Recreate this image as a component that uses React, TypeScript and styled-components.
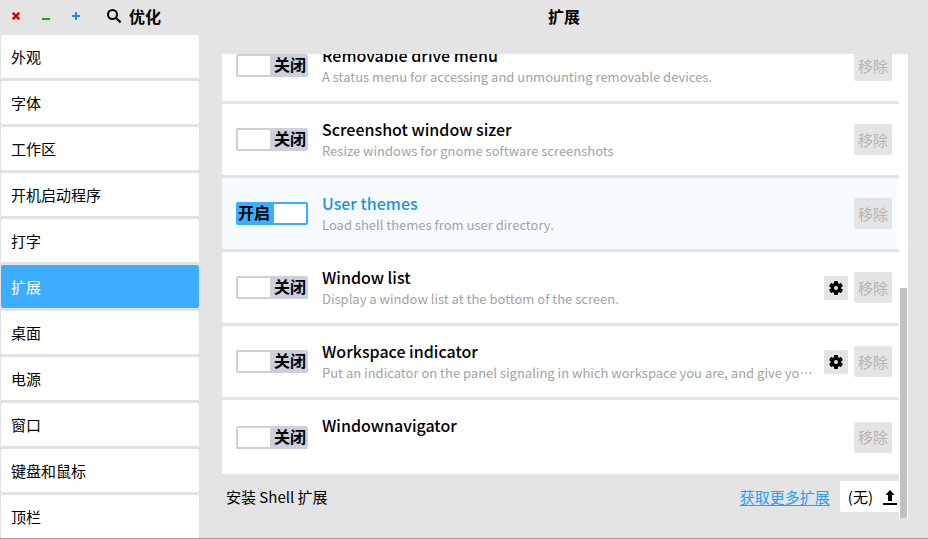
import React, { useState } from "react";
import styled, { createGlobalStyle, css } from "styled-components";

const GlobalStyle = createGlobalStyle`
  *, *::before, *::after { box-sizing: border-box; }
  body {
    margin: 0;
    background: #e4e4e4;
    color: #000;
    font-family: "Noto Sans CJK SC", "Noto Sans", sans-serif;
    font-size: 15px;
    line-height: 24px;
  }
  button { font: inherit; color: inherit; }
`;

const Window = styled.div`
  display: flex;
  height: 100vh;
  overflow: hidden;
  border-bottom: 1px solid #a3a3a3;
`;

const Sidebar = styled.aside`
  display: flex;
  flex-direction: column;
  width: 200px;
  flex: none;
  background: #e2e2e4;
`;

const TitleBar = styled.header`
  display: flex;
  align-items: center;
  height: 35px;
  flex: none;
  padding-bottom: 3px;
  background: #e4e4e4;
`;

const WindowControls = styled.div`
  display: flex;
  gap: 14px;
  padding-left: 8px;
`;

const IconButton = styled.button`
  display: grid;
  place-items: center;
  width: 16px;
  height: 16px;
  padding: 0;
  border: 0;
  background: none;
`;

const SearchButton = styled(IconButton)`
  margin-left: 22px;
`;

const AppName = styled.h1`
  margin: 0 0 0 7px;
  font-size: 16px;
  line-height: 24px;
  font-weight: 700;
`;

const NavList = styled.nav`
  display: flex;
  flex-direction: column;
  gap: 3px;
  padding: 0 1px;
`;

const NavItem = styled.button<{ $active: boolean }>`
  height: 43px;
  padding: 0 10px;
  border: 0;
  border-radius: 2px;
  text-align: left;
  background: ${(p) => (p.$active ? "#3daeff" : "#fff")};
  color: ${(p) => (p.$active ? "#fff" : "#000")};
`;

const Main = styled.main`
  display: flex;
  flex-direction: column;
  flex: 1;
  min-width: 0;
`;

const PageHeader = styled.header`
  display: flex;
  justify-content: center;
  align-items: center;
  height: 35px;
  flex: none;
  padding-bottom: 3px;
`;

const PageTitle = styled.h2`
  margin: 0;
  font-size: 16px;
  line-height: 24px;
  font-weight: 700;
`;

const ScrollArea = styled.div`
  display: flex;
  flex: 1;
  min-height: 0;
  margin: 19px 20px 20px 22px;
`;

const Viewport = styled.div`
  display: flex;
  flex-direction: column;
  justify-content: flex-end;
  flex: 1;
  min-width: 0;
  overflow: hidden;
`;

const ScrollTrack = styled.div`
  display: flex;
  flex-direction: column;
  justify-content: flex-end;
  width: 9px;
  padding: 0 1px;
  background: #fff;
`;

const ScrollThumb = styled.div`
  height: 230px;
  background: #c2c2c2;
`;

const ExtensionList = styled.ul`
  display: flex;
  flex-direction: column;
  gap: 3px;
  margin: 0;
  padding: 0;
  list-style: none;
`;

const ExtensionRow = styled.li<{ $on: boolean }>`
  display: flex;
  align-items: center;
  height: 71px;
  flex: none;
  padding: 0 7px 0 14px;
  border-radius: 2px 0 0 2px;
  background: ${(p) => (p.$on ? "#f6fbff" : "#fff")};
  &:last-child { height: 74px; }
`;

const Switch = styled.label<{ $on: boolean }>`
  display: flex;
  flex: none;
  width: 72px;
  height: 23px;
  padding: 2px;
  border-radius: 2px;
  background: ${(p) => (p.$on ? "#3daeff" : "#cdd0da")};
  ${(p) => p.$on && css`flex-direction: row-reverse;`}
`;

const SwitchInput = styled.input`
  appearance: none;
  flex: none;
  width: 32px;
  height: 19px;
  margin: 0;
  background: #fff;
`;

const SwitchText = styled.span<{ $on: boolean }>`
  flex: 1;
  line-height: 17px;
  white-space: nowrap;
  text-align: ${(p) => (p.$on ? "left" : "right")};
  font-size: 16px;
  font-weight: 700;
`;

const Info = styled.div`
  flex: 1;
  min-width: 0;
  align-self: flex-start;
  padding: 13px 8px 0 14px;
`;

const Name = styled.h3<{ $on: boolean }>`
  margin: 0;
  font-size: 16px;
  line-height: 24px;
  font-weight: 500;
  color: ${(p) => (p.$on ? "#1f93e0" : "#000")};
`;

const Description = styled.p`
  margin: 0;
  font-size: 13px;
  line-height: 20px;
  color: #a3a3a3;
  overflow: hidden;
  white-space: nowrap;
  text-overflow: ellipsis;
`;

const SettingsButton = styled.button`
  display: grid;
  place-items: center;
  flex: none;
  width: 24px;
  height: 24px;
  margin-right: 6px;
  padding: 0;
  border: 0;
  border-radius: 2px;
  background: #e4e4e4;
`;

const RemoveButton = styled.button`
  flex: none;
  height: 31px;
  padding: 0 4px;
  border: 0;
  border-radius: 2px;
  background: #e4e4e4;
  color: #b4b4b4;
`;

const InstallBar = styled.div`
  display: flex;
  align-items: center;
  flex: none;
  padding: 7px 0 6px 4px;
`;

const InstallLabel = styled.span`
  flex: 1;
`;

const MoreLink = styled.a`
  color: #2a9df4;
  text-decoration: underline;
  text-underline-offset: 2px;
`;

const FileButton = styled.button`
  display: flex;
  align-items: center;
  gap: 10px;
  height: 31px;
  margin-left: 10px;
  padding: 0 2px 0 8px;
  border: 0;
  border-radius: 2px 0 0 2px;
  background: #fff;
`;

const pages = ["外观", "字体", "工作区", "开机启动程序", "打字", "扩展", "桌面", "电源", "窗口", "键盘和鼠标", "顶栏"];

type Extension = { name: string; description?: string; settings?: boolean; enabled?: boolean };

const extensions: Extension[] = [
  { name: "Removable drive menu", description: "A status menu for accessing and unmounting removable devices." },
  { name: "Screenshot window sizer", description: "Resize windows for gnome software screenshots" },
  { name: "User themes", description: "Load shell themes from user directory.", enabled: true },
  { name: "Window list", description: "Display a window list at the bottom of the screen.", settings: true },
  {
    name: "Workspace indicator",
    description:
      "Put an indicator on the panel signaling in which workspace you are, and give you the possibility of switching to another one.",
    settings: true,
  },
  { name: "Windownavigator" },
];

const CloseIcon = () => (
  <svg width="8" height="8" viewBox="0 0 8 8" aria-hidden="true">
    <path d="M0.7 0.7 7.3 7.3M7.3 0.7 0.7 7.3" stroke="#d40000" strokeWidth="2.4" />
  </svg>
);

const MinimizeIcon = () => (
  <svg width="8" height="8" viewBox="0 0 8 8" aria-hidden="true">
    <path d="M0 6h8v2H0z" fill="#00b400" />
  </svg>
);

const MaximizeIcon = () => (
  <svg width="8" height="8" viewBox="0 0 8 8" aria-hidden="true">
    <path d="M3 0h2v3h3v2H5v3H3V5H0V3h3z" fill="#1690e6" />
  </svg>
);

const SearchIcon = () => (
  <svg width="16" height="16" viewBox="0 0 16 16" fill="none" stroke="#000" aria-hidden="true">
    <circle cx="6.5" cy="6.5" r="4.5" strokeWidth="2" />
    <path d="M9.8 9.8 14.6 14.4" strokeWidth="2.2" />
  </svg>
);

const GearIcon = () => (
  <svg width="16" height="16" viewBox="0 0 16 16" aria-hidden="true">
    <g fill="#000">
      <rect x="6" y="1" width="4" height="14" rx="1" />
      <rect x="6" y="1" width="4" height="14" rx="1" transform="rotate(60 8 8)" />
      <rect x="6" y="1" width="4" height="14" rx="1" transform="rotate(120 8 8)" />
      <circle cx="8" cy="8" r="5.3" />
    </g>
    <circle cx="8" cy="8" r="2" fill="#e4e4e4" />
  </svg>
);

const UploadIcon = () => (
  <svg width="14" height="16" viewBox="0 0 14 16" aria-hidden="true">
    <path d="M7 1 11.5 6H9v6H5V6H2.5zM0 14h14v2H0z" />
  </svg>
);

export default function App() {
  const [page, setPage] = useState("扩展");
  const [enabled, setEnabled] = useState<string[]>(extensions.filter((e) => e.enabled).map((e) => e.name));
  const toggle = (name: string) =>
    setEnabled((list) => (list.includes(name) ? list.filter((n) => n !== name) : [...list, name]));

  return (
    <>
      <GlobalStyle />
      <Window>
        <Sidebar>
          <TitleBar>
            <WindowControls>
              <IconButton aria-label="关闭窗口"><CloseIcon /></IconButton>
              <IconButton aria-label="最小化"><MinimizeIcon /></IconButton>
              <IconButton aria-label="最大化"><MaximizeIcon /></IconButton>
            </WindowControls>
            <SearchButton aria-label="搜索"><SearchIcon /></SearchButton>
            <AppName>优化</AppName>
          </TitleBar>
          <NavList>
            {pages.map((name) => (
              <NavItem key={name} $active={name === page} onClick={() => setPage(name)}>
                {name}
              </NavItem>
            ))}
          </NavList>
        </Sidebar>
        <Main>
          <PageHeader>
            <PageTitle>扩展</PageTitle>
          </PageHeader>
          <ScrollArea>
            <Viewport>
              <ExtensionList>
                {extensions.map(({ name, description, settings }) => {
                  const on = enabled.includes(name);
                  return (
                    <ExtensionRow key={name} $on={on}>
                      <Switch $on={on}>
                        <SwitchInput
                          type="checkbox"
                          role="switch"
                          aria-label={name}
                          checked={on}
                          onChange={() => toggle(name)}
                        />
                        <SwitchText $on={on}>{on ? "开启" : "关闭"}</SwitchText>
                      </Switch>
                      <Info>
                        <Name $on={on}>{name}</Name>
                        {description && <Description>{description}</Description>}
                      </Info>
                      {settings && (
                        <SettingsButton aria-label={`${name} 设置`}><GearIcon /></SettingsButton>
                      )}
                      <RemoveButton disabled>移除</RemoveButton>
                    </ExtensionRow>
                  );
                })}
              </ExtensionList>
              <InstallBar>
                <InstallLabel id="install-label">安装 Shell 扩展</InstallLabel>
                <MoreLink href="#more">获取更多扩展</MoreLink>
                <FileButton aria-describedby="install-label">
                  (无)
                  <UploadIcon />
                </FileButton>
              </InstallBar>
            </Viewport>
            <ScrollTrack>
              <ScrollThumb />
            </ScrollTrack>
          </ScrollArea>
        </Main>
      </Window>
    </>
  );
}
